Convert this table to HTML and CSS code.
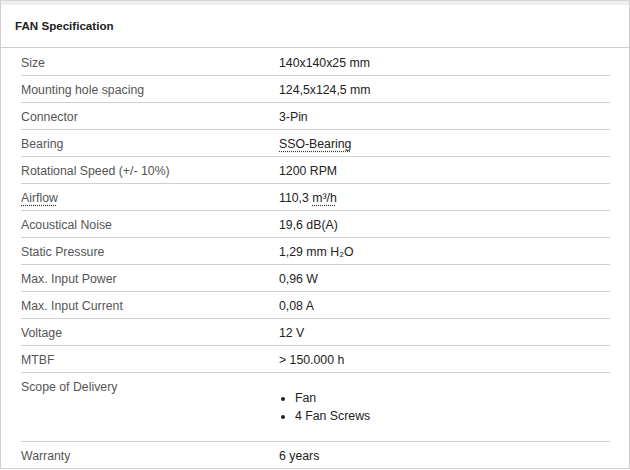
FILE: index.html
```html
<!DOCTYPE html>
<html>
<head>
<meta charset="utf-8">
<link rel="stylesheet" href="styles.css">
</head>
<body>
<div class="box">
  <div class="head">FAN Specification</div>
  <dl class="specs">
    <div class="row"><dt>Size</dt><dd>140x140x25 mm</dd></div>
    <div class="row"><dt>Mounting hole spacing</dt><dd>124,5x124,5 mm</dd></div>
    <div class="row"><dt>Connector</dt><dd>3-Pin</dd></div>
    <div class="row"><dt>Bearing</dt><dd><span class="abbr">SSO-Bearing</span></dd></div>
    <div class="row"><dt>Rotational Speed (+/- 10%)</dt><dd>1200 RPM</dd></div>
    <div class="row"><dt><span class="abbr">Airflow</span></dt><dd>110,3 <span class="abbr">m³/h</span></dd></div>
    <div class="row"><dt>Acoustical Noise</dt><dd>19,6 dB(A)</dd></div>
    <div class="row"><dt>Static Pressure</dt><dd>1,29 mm H₂O</dd></div>
    <div class="row"><dt>Max. Input Power</dt><dd>0,96 W</dd></div>
    <div class="row"><dt>Max. Input Current</dt><dd>0,08 A</dd></div>
    <div class="row"><dt>Voltage</dt><dd>12 V</dd></div>
    <div class="row"><dt>MTBF</dt><dd>&gt; 150.000 h</dd></div>
    <div class="row"><dt>Scope of Delivery</dt><dd><ul class="items"><li>Fan</li><li>4 Fan Screws</li></ul></dd></div>
    <div class="row last"><dt>Warranty</dt><dd>6 years</dd></div>
  </dl>
</div>
</body>
</html>
```
FILE: styles.css
```css
html, body {
  margin: 0;
  padding: 0;
  background: #fff;
}
body {
  font-family: "Liberation Sans", Arial, sans-serif;
  font-size: 12.3px;
  color: #222;
}
.box {
  width: 628px;
  height: 467px;
  border: 1px solid #cfcfcf;
  border-top-color: #d8d8d8;
  box-sizing: content-box;
}
.head {
  border-top: 4px solid #efefef;
  height: 42px;
  line-height: 42px;
  padding-left: 14px;
  font-weight: bold;
  font-size: 11.6px;
  color: #222;
  border-bottom: 1px solid #cfcfcf;
}
.specs {
  margin: 0 19px 0 20px;
  padding: 1px 0 0;
}
.row {
  display: grid;
  grid-template-columns: 258px 1fr;
  padding: 7px 0 4px;
  line-height: 15px;
  border-bottom: 1px solid #d0d0d0;
}
.row.last {
  border-bottom: none;
  padding-top: 7px;
}
dt {
  margin: 0;
  color: #555;
}
dd {
  margin: 0;
  color: #222;
}
.abbr {
  text-decoration: underline dotted #333;
  text-underline-offset: 3px;
}
.items {
  margin: 9px 0 12px;
  padding: 0 0 0 16px;
  line-height: 18px;
}
```
